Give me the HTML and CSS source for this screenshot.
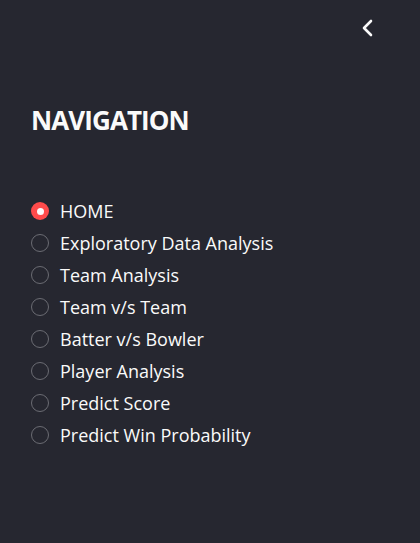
FILE: index.html
```html
<!DOCTYPE html>
<html>
<head>
<meta charset="utf-8">
<link rel="stylesheet" href="styles.css">
</head>
<body>
<aside class="sidebar">
  <div class="topbar">
    <button class="collapse" aria-label="Close sidebar">
      <svg width="14" height="18" viewBox="0 0 14 18"><path d="M10 2 L3 9 L10 16" fill="none" stroke="#fafafa" stroke-width="2.6" stroke-linecap="round" stroke-linejoin="round"/></svg>
    </button>
  </div>
  <h2 class="title">NAVIGATION</h2>
  <div class="radios">
    <label class="radio checked"><span class="dot"></span><span class="label">HOME</span></label>
    <label class="radio"><span class="dot"></span><span class="label">Exploratory Data Analysis</span></label>
    <label class="radio"><span class="dot"></span><span class="label">Team Analysis</span></label>
    <label class="radio"><span class="dot"></span><span class="label">Team v/s Team</span></label>
    <label class="radio"><span class="dot"></span><span class="label">Batter v/s Bowler</span></label>
    <label class="radio"><span class="dot"></span><span class="label">Player Analysis</span></label>
    <label class="radio"><span class="dot"></span><span class="label">Predict Score</span></label>
    <label class="radio"><span class="dot"></span><span class="label">Predict Win Probability</span></label>
  </div>
</aside>
</body>
</html>
```
FILE: styles.css
```css
html, body {
  margin: 0;
  padding: 0;
  background: #262730;
  height: 100%;
}
.sidebar {
  font-family: "Open Sans", "Noto Sans", sans-serif;
  color: #fafafa;
  padding: 0 0 0 31px;
  box-sizing: border-box;
  height: 543px;
}
.topbar {
  display: flex;
  justify-content: flex-end;
  padding: 19px 45px 0 0;
  height: 40px;
  box-sizing: border-box;
}
.collapse {
  background: none;
  border: none;
  padding: 0;
  width: 14px;
  height: 18px;
  display: flex;
}
.title {
  margin: 60px 0 0 0;
  font-size: 26px;
  line-height: 40px;
  font-weight: 700;
  letter-spacing: -0.9px;
}
.radios {
  margin-top: 55px;
  display: flex;
  flex-direction: column;
}
.radio {
  display: flex;
  align-items: center;
  height: 32px;
  gap: 11px;
}
.dot {
  width: 18px;
  height: 18px;
  border-radius: 50%;
  border: 1.5px solid #6b6c73;
  box-sizing: border-box;
  flex: none;
}
.radio.checked .dot {
  background: #ff4b4b;
  border: none;
  display: flex;
  align-items: center;
  justify-content: center;
}
.radio.checked .dot::after {
  content: "";
  width: 7px;
  height: 7px;
  border-radius: 50%;
  background: #fafafa;
}
.label {
  font-size: 18px;
  line-height: 24px;
  font-weight: 500;
}
```
